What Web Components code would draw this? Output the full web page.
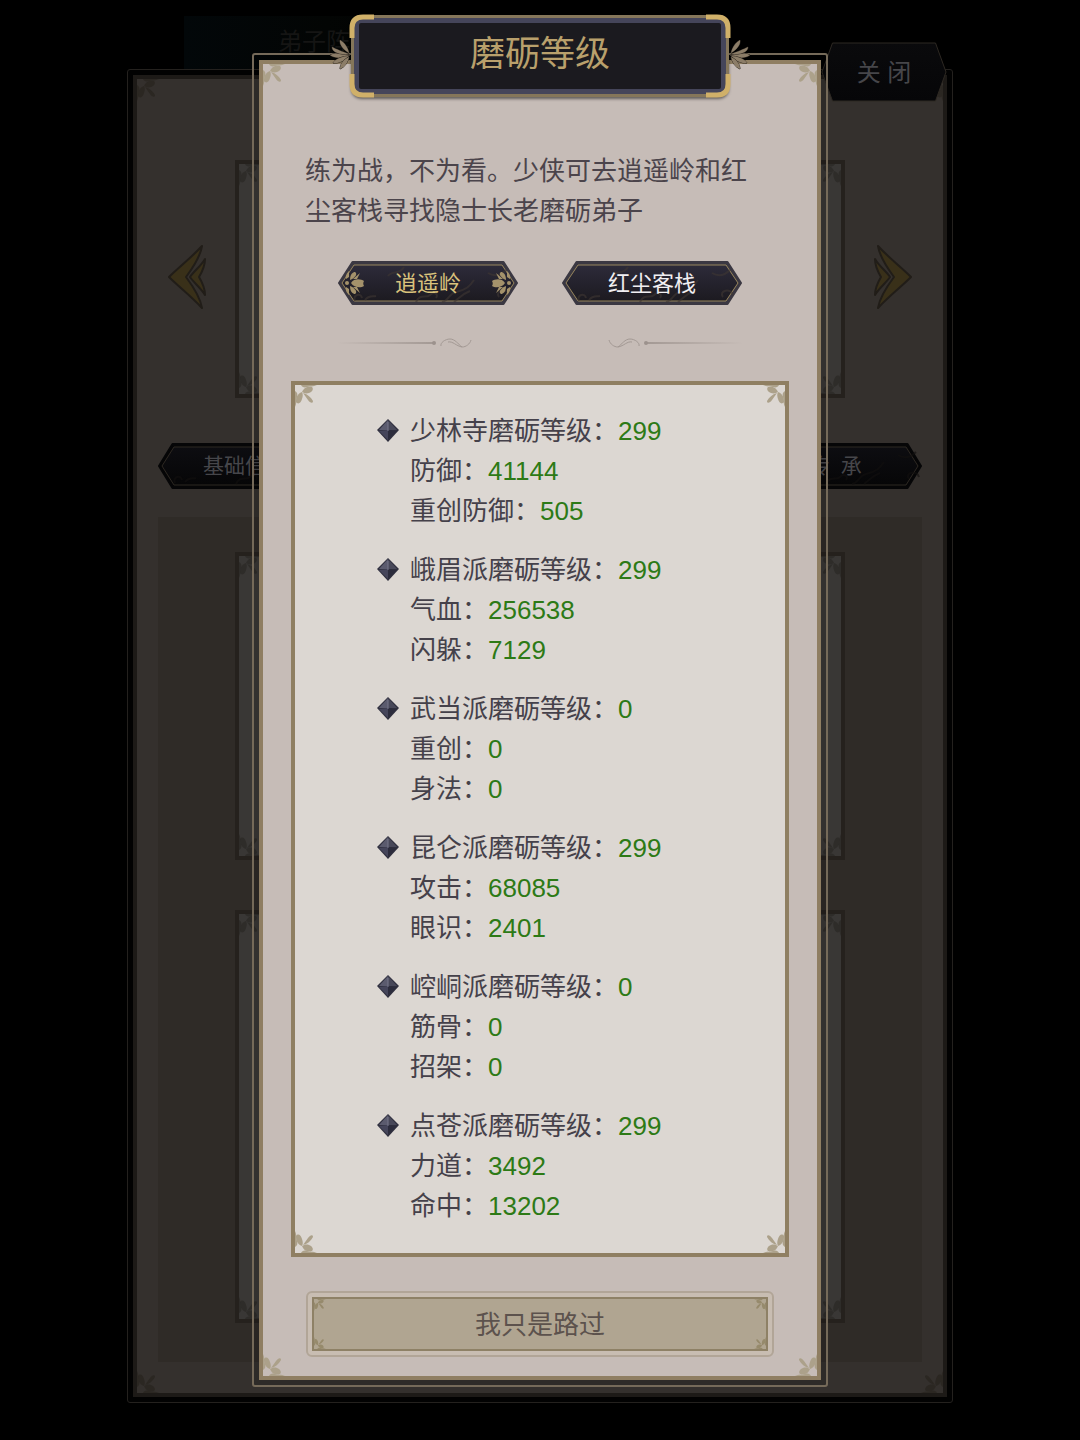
<!DOCTYPE html>
<html lang="zh-CN">
<head>
<meta charset="utf-8">
<meta name="viewport" content="width=device-width, initial-scale=1">
<title>磨砺等级</title>
<style>
    body {
        margin: 0;
        background: #000;
        font-family: "Liberation Sans", "Noto Sans CJK SC", sans-serif;
    }
</style>
</head>
<body>
<training-page></training-page>

<script>
// One leaf spray, drawn for the top left corner and flipped for the others
const SPRAY = `
    <path d="M7 7C9 2 13 1 17 2C19 4 17 7 14 8C11 9 9 8 7 7Z"/>
    <path d="M7 7C2 9 1 13 1 17C3 20 6 18 7 14C8 11 8 9 7 7Z"/>
    <path d="M8 8C12 9 16 12 18 16C18 19 15 18 13 15Z"/>
    <path d="M6 0H22C18 2 15 1 12 2C9 3 7 2 6 0Z"/>
    <path d="M0 6V22C2 18 1 15 2 12C3 9 2 7 0 6Z"/>
`;

const CORNERS = ['tl', 'tr', 'bl', 'br'].map(pos =>
    `<svg class="corner ${pos}" viewBox="0 0 22 22" aria-hidden="true">${SPRAY}</svg>`).join('');

const CORNER_STYLE = `
    .corner {
        position: absolute;
        width: var(--corner-size, 22px);
        height: var(--corner-size, 22px);
        fill: var(--corner-color, #aca18a);
        pointer-events: none;
    }
    .tl { top: 0; left: 0; }
    .tr { top: 0; right: 0; transform: scaleX(-1); }
    .bl { bottom: 0; left: 0; transform: scaleY(-1); }
    .br { bottom: 0; right: 0; transform: scale(-1); }
`;

function attach(el, html) {
    const template = document.createElement('template');
    template.innerHTML = html;
    el.attachShadow({ mode: 'open' });
    el.shadowRoot.appendChild(template.content.cloneNode(true));
}

// Thin outer line, a see-through gap, then the solid panel
class DoubleFrame extends HTMLElement {
    constructor() {
        super();
        attach(this, `
            <style>
                :host {
                    display: block;
                    box-sizing: border-box;
                    border: var(--line-width, 2px) solid var(--line-color, #756a59);
                    border-radius: 3px;
                    padding: 5px;
                    background: var(--gap-color, rgba(0, 0, 0, .1));
                }
                .panel {
                    position: relative;
                    border: 4px solid var(--edge-color, #8f7e62);
                    background: var(--panel-color, #c6bcb7);
                }
                ${CORNER_STYLE}
            </style>
            <div class="panel">${CORNERS}<slot></slot></div>
        `);
    }
}
customElements.define('double-frame', DoubleFrame);

class OrnateCard extends HTMLElement {
    constructor() {
        super();
        attach(this, `
            <style>
                :host {
                    display: block;
                    position: relative;
                    box-sizing: border-box;
                    border: 4px solid var(--edge-color, #8f7f62);
                    background: var(--card-color, #dcd7d2);
                }
                ${CORNER_STYLE}
            </style>
            ${CORNERS}<slot></slot>
        `);
    }
}
customElements.define('ornate-card', OrnateCard);

// Pointed plate button. width / height / cut set the plate, "flowers" adds the end rosettes,
// "plain" leaves a single outline with no pattern
class HexButton extends HTMLElement {
    constructor() {
        super();
        const w = +this.getAttribute('width') || 180;
        const h = +this.getAttribute('height') || 44;
        const cut = +this.getAttribute('cut') || 14;
        const plain = this.hasAttribute('plain');
        const hex = (d) => {
            const c = cut + d / 2;
            return `${d},${h / 2} ${c},${d} ${w - c},${d} ${w - d},${h / 2} ${w - c},${h - d} ${c},${h - d}`;
        };
        const rosette = `
            <circle cx="9" cy="22" r="2"/>
            <path d="M13 22C16 17 23 18 26 20C25 22 25 23 26 25C23 27 16 27 13 22Z"/>
            <path d="M12 19C12 13 15 11 17 11C20 13 17 17 12 19Z"/>
            <path d="M12 25C12 31 15 33 17 33C20 31 17 27 12 25Z"/>
            <path d="M15 18L22 12L19 18ZM15 26L22 32L19 26Z"/>
            <path d="M8 18C7 15 9 12 11 10L11 16ZM8 26C7 29 9 32 11 34L11 28Z"/>
        `;
        const cloud = `
            <g class="cloud">
                <path d="M78 41C82 32 88 38 92 34C96 30 101 33 98 37"/>
                <path d="M104 41C112 39 110 33 118 31C128 29 132 25 136 19"/>
                <path d="M116 41C122 36 124 33 132 30"/>
                <path d="M17 40C14 34 23 31 24 37M27 39C31 34 35 36 38 35"/>
                <path d="M50 15C54 9 62 14 66 6M150 12C158 17 164 13 168 9M161 36C156 30 169 26 171 34"/>
            </g>
        `;
        attach(this, `
            <style>
                :host {
                    display: block;
                    width: ${w}px;
                }
                button {
                    display: grid;
                    place-items: center;
                    width: 100%;
                    height: ${h}px;
                    margin: 0;
                    padding: 0;
                    border: 0;
                    background: none;
                    color: inherit;
                    font: inherit;
                    cursor: pointer;
                }
                svg, span { grid-area: 1 / 1; }
                svg { width: 100%; height: ${h}px; }
                span { padding-bottom: 4px; white-space: pre; }
                .plate {
                    fill: var(--plate-edge, #3b3842);
                    stroke: var(--plate-edge, #3b3842);
                    stroke-width: 2;
                    stroke-linejoin: round;
                }
                .inset {
                    fill: url(#shade);
                    stroke: var(--plate-line, #97855c);
                    stroke-linejoin: round;
                }
                .rosette { fill: #a4926b; }
                .cloud {
                    fill: none;
                    stroke: var(--plate-pattern, #3f3733);
                    stroke-width: 2;
                    opacity: .6;
                }
            </style>
            <button type="button">
                <svg viewBox="0 0 ${w} ${h}" preserveAspectRatio="none" aria-hidden="true">
                    <defs>
                        <linearGradient id="shade" x2="0" y2="1">
                            <stop style="stop-color: var(--plate-top, #2d2b3a)"/>
                            <stop offset="1" style="stop-color: var(--plate-bottom, #1c1a20)"/>
                        </linearGradient>
                    </defs>
                    ${plain ? '' : `<polygon class="plate" points="${hex(1)}"/>`}
                    <polygon class="inset" points="${hex(plain ? 1 : 4)}"/>
                    ${plain ? '' : cloud}
                    ${this.hasAttribute('flowers') ? `
                        <g class="rosette">${rosette}</g>
                        <g class="rosette" transform="translate(${w}) scale(-1 1)">${rosette}</g>` : ''}
                </svg>
                <span><slot></slot></span>
            </button>
        `);
    }
}
customElements.define('hex-button', HexButton);

class ArrowButton extends HTMLElement {
    constructor() {
        super();
        attach(this, `
            <style>
                :host { display: block; width: 40px; }
                :host([next]) svg { transform: scaleX(-1); }
                button {
                    display: block;
                    padding: 0 0 4px;
                    border: 0;
                    background: none;
                }
                svg { display: block; width: 40px; height: 64px; }
                path {
                    fill: #393019;
                    stroke: #211d18;
                    stroke-width: 2;
                    stroke-linejoin: round;
                }
            </style>
            <button type="button" aria-label="${this.hasAttribute('next') ? '下一个' : '上一个'}">
                <svg viewBox="0 0 40 64" aria-hidden="true">
                    <path d="M34 1C23 13 11 22 1 32C11 42 23 51 34 63C32 51 24 40 18 32C24 24 32 13 34 1Z"/>
                    <path d="M37 14C33 21 26 26 22 32C26 38 33 43 37 50C37 43 34 37 31 32C34 27 37 21 37 14Z"/>
                </svg>
            </button>
        `);
    }
}
customElements.define('arrow-button', ArrowButton);

class TitlePlate extends HTMLElement {
    constructor() {
        super();
        const bracket = `<path d="M3 24V14Q3 3 14 3H25"/>`;
        const leaf = `
            <path d="M21 15C16 14 8 12 1 15C6 19 15 18 21 15Z"/>
            <path d="M20 14C14 12 7 9 3 7C3 12 10 15 20 14Z"/>
            <path d="M20 13C15 10 10 5 11 0C16 3 19 8 20 13Z"/>
            <path d="M20 16C14 16 6 19 4 23C10 24 16 20 20 16Z"/>
            <path d="M20 17C15 19 11 24 11 29C16 27 19 22 20 17Z"/>
        `;
        attach(this, `
            <style>
                :host {
                    display: block;
                    position: relative;
                    box-sizing: border-box;
                    width: 382px;
                    max-width: 80%;
                    height: 84px;
                    padding: 1px 2px;
                }
                h1 {
                    display: flex;
                    align-items: center;
                    justify-content: center;
                    box-sizing: border-box;
                    height: 82px;
                    margin: 0;
                    border: 3px solid #85765a;
                    border-radius: 10px;
                    background: #1b1a1f;
                    box-shadow: inset 0 0 0 5px #45455a, 0 2px 3px rgba(0, 0, 0, .5);
                    color: #b9a06c;
                    font-size: 35px;
                    font-weight: 400;
                    line-height: 48px;
                    padding-bottom: 4px;
                }
                .bracket {
                    position: absolute;
                    width: 26px;
                    height: 26px;
                    fill: none;
                    stroke: #d0b069;
                    stroke-width: 5;
                }
                .tl { top: 0; left: 0; }
                .tr { top: 0; right: 0; transform: scaleX(-1); }
                .bl { bottom: 0; left: 0; transform: scaleY(-1); }
                .br { bottom: 0; right: 0; transform: scale(-1); }
                .leaf {
                    position: absolute;
                    top: 26px;
                    width: 22px;
                    height: 30px;
                    fill: #8c7d68;
                    stroke: #2c2620;
                    stroke-width: 1;
                    paint-order: stroke;
                }
                .leaf.left { right: 100%; margin-right: -2px; }
                .leaf.right { left: 100%; margin-left: -2px; transform: scaleX(-1); }
            </style>
            <svg class="leaf left" viewBox="0 0 22 30" aria-hidden="true">${leaf}</svg>
            <svg class="leaf right" viewBox="0 0 22 30" aria-hidden="true">${leaf}</svg>
            <h1><slot></slot></h1>
            ${['tl', 'tr', 'bl', 'br'].map(pos =>
                `<svg class="bracket ${pos}" viewBox="0 0 26 26" aria-hidden="true">${bracket}</svg>`).join('')}
        `);
    }
}
customElements.define('title-plate', TitlePlate);

class SwirlDivider extends HTMLElement {
    constructor() {
        super();
        const half = `
            <linearGradient id="fade"><stop stop-color="#a39994" stop-opacity="0"/><stop offset="1" stop-color="#a39994"/></linearGradient>
            <rect x="0" y="8" width="97" height="2" fill="url(#fade)"/>
            <circle cx="97" cy="9" r="2" fill="#9c928d"/>
            <path d="M104 12C103 9 108 5 113 5C118 5 121 10 125 13M111 8C116 7 119 12 125 13C129 13 133 10 134 6"/>
        `;
        attach(this, `
            <style>
                :host {
                    display: flex;
                    justify-content: space-between;
                }
                svg {
                    width: 136px;
                    height: 18px;
                    fill: none;
                    stroke-width: 1;
                }
                path { stroke: #a39994; }
                .right { transform: scaleX(-1); }
            </style>
            <svg viewBox="0 0 136 18" aria-hidden="true">${half}</svg>
            <svg class="right" viewBox="0 0 136 18" aria-hidden="true">${half}</svg>
        `);
    }
}
customElements.define('swirl-divider', SwirlDivider);

// <sect-stats name="少林寺" level="299" stats="防御:41144,重创防御:505">
class SectStats extends HTMLElement {
    constructor() {
        super();
        const rows = this.getAttribute('stats').split(',').map(s => s.split(':'));
        attach(this, `
            <style>
                :host {
                    display: grid;
                    grid-template-columns: 22px 1fr;
                    column-gap: 11px;
                    color: #45414a;
                    font-size: 26px;
                    line-height: 40px;
                }
                svg { width: 22px; height: 24px; margin-top: 8px; }
                p { margin: 0; }
                b { color: #2d7a16; font-weight: 400; }
            </style>
            <svg viewBox="0 0 22 24" aria-hidden="true">
                <path fill="#30303f" d="M11 0L22 11L11 23L0 11Z"/>
                <path fill="#5b5b6e" d="M11 1L11 11L2 11Z"/>
                <path fill="#484859" d="M11 1L20 11L11 11Z"/>
                <path fill="#45455a" d="M2 12L11 11L11 21Z"/>
                <path fill="#2c2c3c" d="M20 12L11 11L11 21Z"/>
                <path stroke="#77778a" d="M11 3V12" fill="none"/>
            </svg>
            <div>
                <p>${this.getAttribute('name')}磨砺等级：<b>${this.getAttribute('level')}</b></p>
                ${rows.map(([label, value]) => `<p>${label}：<b>${value}</b></p>`).join('')}
            </div>
        `);
    }
}
customElements.define('sect-stats', SectStats);

class WideButton extends HTMLElement {
    constructor() {
        super();
        attach(this, `
            <style>
                :host { display: block; --corner-size: 12px; --corner-color: #968a6c; }
                button {
                    display: block;
                    width: 100%;
                    height: 66px;
                    padding: 4px;
                    border: 2px solid #b1a597;
                    border-radius: 6px;
                    background: #c8bdb2;
                    color: #5c524d;
                    font: inherit;
                    font-size: 26px;
                    cursor: pointer;
                }
                span {
                    display: flex;
                    position: relative;
                    align-items: center;
                    justify-content: center;
                    box-sizing: border-box;
                    height: 100%;
                    padding-bottom: 4px;
                    border: 2px solid #8e8166;
                    background: #b0a591;
                }
                ${CORNER_STYLE}
            </style>
            <button type="button"><span>${CORNERS}<slot></slot></span></button>
        `);
    }
}
customElements.define('wide-button', WideButton);

// The disciple screen, dimmed behind the dialog
class DiscipleScreen extends HTMLElement {
    constructor() {
        super();
        attach(this, `
            <style>
                :host {
                    display: block;
                    position: relative;
                    box-sizing: border-box;
                    width: 826px;
                    max-width: 100%;
                    padding: 69px 0 37px;
                    color: #46464a;
                    --line-width: 1px;
                    --line-color: #24211e;
                    --gap-color: #020202;
                    --edge-color: #1d1a17;
                    --panel-color: #34302d;
                    --corner-color: #2b2722;
                    --plate-edge: #060607;
                    --plate-line: #2d2822;
                    --plate-top: #0d0d11;
                    --plate-bottom: #060607;
                    --plate-pattern: #12100f;
                }
                .banner {
                    position: absolute;
                    top: 16px;
                    left: 57px;
                    right: 57px;
                    height: 53px;
                    box-sizing: border-box;
                    padding: 8px 94px;
                    background: linear-gradient(90deg, #020709, #030504 20%, #000 45%);
                    color: #151514;
                    font-size: 24px;
                    line-height: 36px;
                }
                .close {
                    position: absolute;
                    top: 42px;
                    right: 6px;
                    font-size: 24px;
                    --plate-top: #0a0a0c;
                    --plate-bottom: #060608;
                }
                double-frame { position: relative; }
                .portrait {
                    display: flex;
                    align-items: center;
                    gap: 27px;
                    padding: 81px 31px 45px;
                }
                ornate-card { --card-color: #393735; --edge-color: #25211d; --corner-color: #2e2c29; }
                .portrait ornate-card { flex: 1; height: 238px; }
                .tabs {
                    display: flex;
                    justify-content: space-between;
                    padding: 0 21px 28px;
                    font-size: 21px;
                }
                .body {
                    display: grid;
                    gap: 50px;
                    margin: 0 21px;
                    padding: 35px 77px 39px;
                    background: #2f2b27;
                }
                .skills { height: 308px; }
                .gear { height: 413px; }
                .foot { height: 31px; }
            </style>
            <div class="banner">弟子阵容</div>
            <double-frame>
                <div class="portrait">
                    <arrow-button></arrow-button>
                    <ornate-card></ornate-card>
                    <arrow-button next></arrow-button>
                </div>
                <div class="tabs">
                    <hex-button width="174" height="46">基础信息</hex-button>
                    <hex-button width="174" height="46">传  承</hex-button>
                </div>
                <div class="body">
                    <ornate-card class="skills"></ornate-card>
                    <ornate-card class="gear"></ornate-card>
                </div>
                <div class="foot"></div>
            </double-frame>
            <hex-button class="close" width="126" height="60" cut="11" plain>关 闭</hex-button>
        `);
    }
}
customElements.define('disciple-screen', DiscipleScreen);

class TrainingDialog extends HTMLElement {
    constructor() {
        super();
        attach(this, `
            <style>
                :host {
                    display: flex;
                    position: relative;
                    flex-direction: column;
                    align-items: center;
                    box-sizing: border-box;
                    width: 576px;
                    max-width: 100%;
                    padding-top: 14px;
                }
                title-plate { z-index: 1; margin-bottom: -45px; }
                double-frame { width: 100%; }
                .intro {
                    margin: 0;
                    padding: 87px 64px 30px 42px;
                    color: #4b444b;
                    font-size: 26px;
                    line-height: 40px;
                }
                .places {
                    display: flex;
                    justify-content: center;
                    gap: 44px;
                    padding-bottom: 29px;
                    color: #f1eff2;
                    font-size: 22px;
                }
                .places [flowers] { color: #d9c27c; }
                swirl-divider { margin: 0 74px 29px; }
                ornate-card { margin: 0 28px 34px; }
                .list {
                    display: grid;
                    gap: 19px;
                    padding: 26px 20px 27px 82px;
                }
                wide-button { margin: 0 43px; padding-bottom: 19px; }
            </style>
            <title-plate>磨砺等级</title-plate>
            <double-frame>
                <p class="intro">练为战，不为看。少侠可去逍遥岭和红尘客栈寻找隐士长老磨砺弟子</p>
                <div class="places">
                    <hex-button flowers>逍遥岭</hex-button>
                    <hex-button>红尘客栈</hex-button>
                </div>
                <swirl-divider></swirl-divider>
                <ornate-card>
                    <div class="list">
                        <sect-stats name="少林寺" level="299" stats="防御:41144,重创防御:505"></sect-stats>
                        <sect-stats name="峨眉派" level="299" stats="气血:256538,闪躲:7129"></sect-stats>
                        <sect-stats name="武当派" level="0" stats="重创:0,身法:0"></sect-stats>
                        <sect-stats name="昆仑派" level="299" stats="攻击:68085,眼识:2401"></sect-stats>
                        <sect-stats name="崆峒派" level="0" stats="筋骨:0,招架:0"></sect-stats>
                        <sect-stats name="点苍派" level="299" stats="力道:3492,命中:13202"></sect-stats>
                    </div>
                </ornate-card>
                <wide-button>我只是路过</wide-button>
            </double-frame>
        `);
    }
}
customElements.define('training-dialog', TrainingDialog);

class TrainingPage extends HTMLElement {
    constructor() {
        super();
        attach(this, `
            <style>
                :host {
                    display: grid;
                    justify-items: center;
                    align-items: start;
                    min-height: 100vh;
                }
                disciple-screen, training-dialog { grid-area: 1 / 1; }
            </style>
            <disciple-screen></disciple-screen>
            <training-dialog role="dialog" aria-label="磨砺等级"></training-dialog>
        `);
    }
}
customElements.define('training-page', TrainingPage);
</script>
</body>
</html>
